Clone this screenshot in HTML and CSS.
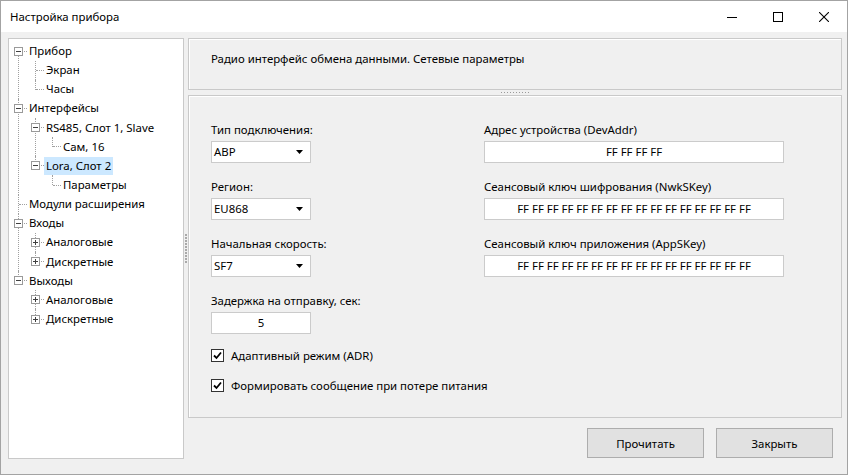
FILE: index.html
```html
<!DOCTYPE html>
<html lang="ru">

<head>
    <meta charset="UTF-8">
    <title>Настройка прибора</title>
    <link rel="stylesheet" href="styles.css">
</head>

<body>
    <div class="window">
        <div class="titlebar">
            <span class="title">Настройка прибора</span>
            <div class="controls">
                <span class="ctl"><svg width="10" height="10" viewBox="0 0 10 10"><path d="M0 5.5H10" stroke="#000" stroke-width="1"/></svg></span>
                <span class="ctl"><svg width="10" height="10" viewBox="0 0 10 10"><rect x="0.5" y="0.5" width="9" height="9" fill="none" stroke="#000"/></svg></span>
                <span class="ctl"><svg width="10" height="10" viewBox="0 0 10 10"><path d="M0 0L10 10M10 0L0 10" stroke="#000" stroke-width="1.1"/></svg></span>
            </div>
        </div>

        <div class="content">
            <div class="tree-panel">
                <ul class="tree">
                    <li>
                        <div class="row"><span class="gut"><i class="exp minus"></i></span><span class="txt">Прибор</span></div>
                        <ul>
                            <li><div class="row"><span class="gut"></span><span class="txt">Экран</span></div></li>
                            <li><div class="row"><span class="gut"></span><span class="txt">Часы</span></div></li>
                        </ul>
                    </li>
                    <li>
                        <div class="row"><span class="gut"><i class="exp minus"></i></span><span class="txt">Интерфейсы</span></div>
                        <ul>
                            <li>
                                <div class="row"><span class="gut"><i class="exp minus"></i></span><span class="txt">RS485, Слот 1, Slave</span></div>
                                <ul>
                                    <li><div class="row"><span class="gut"></span><span class="txt">Сам, 16</span></div></li>
                                </ul>
                            </li>
                            <li>
                                <div class="row"><span class="gut"><i class="exp minus"></i></span><span class="txt selected">Lora, Слот 2</span></div>
                                <ul>
                                    <li><div class="row"><span class="gut"></span><span class="txt">Параметры</span></div></li>
                                </ul>
                            </li>
                        </ul>
                    </li>
                    <li><div class="row"><span class="gut"></span><span class="txt">Модули расширения</span></div></li>
                    <li>
                        <div class="row"><span class="gut"><i class="exp minus"></i></span><span class="txt">Входы</span></div>
                        <ul>
                            <li><div class="row"><span class="gut"><i class="exp plus"></i></span><span class="txt">Аналоговые</span></div></li>
                            <li><div class="row"><span class="gut"><i class="exp plus"></i></span><span class="txt">Дискретные</span></div></li>
                        </ul>
                    </li>
                    <li>
                        <div class="row"><span class="gut"><i class="exp minus"></i></span><span class="txt">Выходы</span></div>
                        <ul>
                            <li><div class="row"><span class="gut"><i class="exp plus"></i></span><span class="txt">Аналоговые</span></div></li>
                            <li><div class="row"><span class="gut"><i class="exp plus"></i></span><span class="txt">Дискретные</span></div></li>
                        </ul>
                    </li>
                </ul>
            </div>

            <div class="vsplit"><span class="grip-v"></span></div>

            <div class="right">
                <div class="head-panel">Радио интерфейс обмена данными. Сетевые параметры</div>
                <div class="hsplit"><span class="grip-h"></span></div>
                <div class="main-panel">
                    <div class="col col-left">
                        <div class="field">
                            <div class="lbl">Тип подключения:</div>
                            <div class="select"><span>ABP</span><svg width="7" height="4" viewBox="0 0 7 4"><path d="M0 0H7L3.5 4Z" fill="#000"/></svg></div>
                        </div>
                        <div class="field">
                            <div class="lbl">Регион:</div>
                            <div class="select"><span>EU868</span><svg width="7" height="4" viewBox="0 0 7 4"><path d="M0 0H7L3.5 4Z" fill="#000"/></svg></div>
                        </div>
                        <div class="field">
                            <div class="lbl">Начальная скорость:</div>
                            <div class="select"><span>SF7</span><svg width="7" height="4" viewBox="0 0 7 4"><path d="M0 0H7L3.5 4Z" fill="#000"/></svg></div>
                        </div>
                        <div class="field">
                            <div class="lbl">Задержка на отправку, сек:</div>
                            <div class="input short">5</div>
                        </div>
                        <div class="check first"><span class="box"><svg width="11" height="11" viewBox="0 0 11 11"><path d="M2 5.5L4.5 8L9 2.5" fill="none" stroke="#000" stroke-width="1.8"/></svg></span>Адаптивный режим (ADR)</div>
                        <div class="check"><span class="box"><svg width="11" height="11" viewBox="0 0 11 11"><path d="M2 5.5L4.5 8L9 2.5" fill="none" stroke="#000" stroke-width="1.8"/></svg></span>Формировать сообщение при потере питания</div>
                    </div>
                    <div class="col col-right">
                        <div class="field">
                            <div class="lbl">Адрес устройства (DevAddr)</div>
                            <div class="input">FF FF FF FF</div>
                        </div>
                        <div class="field">
                            <div class="lbl">Сеансовый ключ шифрования (NwkSKey)</div>
                            <div class="input">FF FF FF FF FF FF FF FF FF FF FF FF FF FF FF FF</div>
                        </div>
                        <div class="field">
                            <div class="lbl">Сеансовый ключ приложения (AppSKey)</div>
                            <div class="input">FF FF FF FF FF FF FF FF FF FF FF FF FF FF FF FF</div>
                        </div>
                    </div>
                </div>
                <div class="buttons">
                    <button class="btn">Прочитать</button>
                    <button class="btn">Закрыть</button>
                </div>
            </div>
        </div>
    </div>
</body>

</html>
```

FILE: styles.css
```css
* {
    box-sizing: border-box;
}

html,
body {
    margin: 0;
    padding: 0;
    width: 848px;
    height: 475px;
    overflow: hidden;
}

body {
    font-family: "Noto Sans", "Open Sans", sans-serif;
    font-size: 11.4px;
    color: #000;
    background: #fff;
}

.window {
    width: 848px;
    height: 475px;
    border: 1px solid #a3a3a3;
    background: #f0f0f0;
    display: flex;
    flex-direction: column;
}

/* title bar */
.titlebar {
    height: 31px;
    flex: none;
    background: #fff;
    display: flex;
    align-items: center;
}

.title {
    padding-left: 9px;
    flex: 1;
}

.controls {
    display: flex;
    height: 100%;
}

.ctl {
    width: 46px;
    height: 100%;
    display: flex;
    align-items: center;
    justify-content: center;
}

.ctl svg {
    display: block;
}

.content {
    flex: 1;
    display: flex;
    padding: 6px 5px 15px 7px;
}

/* tree */
.tree-panel {
    width: 176px;
    flex: none;
    background: #fff;
    border: 1px solid #c9c9c9;
    padding-top: 2.5px;
}

.tree,
.tree ul {
    list-style: none;
    margin: 0;
    padding: 0;
}

.tree ul {
    padding-left: 17px;
}

.tree li {
    position: relative;
}

.tree li::before {
    content: "";
    position: absolute;
    left: 9px;
    top: 0;
    bottom: 0;
    border-left: 1px dotted #a0a0a0;
}

.tree > li:first-child::before {
    top: 9px;
}

.tree li:last-child::before {
    bottom: auto;
    height: 10px;
}

.row {
    display: flex;
    align-items: center;
    height: 19.15px;
    white-space: nowrap;
}

.gut {
    width: 20px;
    height: 19px;
    flex: none;
    position: relative;
}

.gut::after {
    content: "";
    position: absolute;
    left: 10px;
    top: 9px;
    width: 8px;
    border-top: 1px dotted #a0a0a0;
}

.exp {
    position: absolute;
    left: 5px;
    top: 5px;
    width: 9px;
    height: 9px;
    border: 1px solid #9a9a9a;
    background: #fff;
    z-index: 1;
}

.exp::before,
.exp::after {
    content: "";
    position: absolute;
    background: #404040;
}

.exp::before {
    left: 1px;
    top: 3px;
    width: 5px;
    height: 1px;
}

.exp.plus::after {
    left: 3px;
    top: 1px;
    width: 1px;
    height: 5px;
}

.txt {
    padding: 1px 2px;
    margin-left: -2px;
    line-height: 16px;
}

.txt.selected {
    background: #cce8ff;
}

/* splitters */
.vsplit {
    width: 4px;
    flex: none;
    display: flex;
    align-items: center;
    justify-content: center;
}

.grip-v {
    width: 2px;
    height: 29px;
    background: repeating-linear-gradient(to bottom, #a9a9a9 0 2px, transparent 2px 3px);
}

.hsplit {
    height: 5px;
    flex: none;
    display: flex;
    align-items: center;
    justify-content: center;
}

.grip-h {
    width: 29px;
    height: 1px;
    background: repeating-linear-gradient(to right, #9a9a9a 0 1px, transparent 1px 3px);
}

/* right side */
.right {
    width: 654px;
    flex: none;
    display: flex;
    flex-direction: column;
}

.head-panel {
    height: 52px;
    flex: none;
    border: 1px solid #c9c9c9;
    box-shadow: inset 1px 1px 0 #fff;
    padding: 12px 0 0 22px;
    line-height: 16px;
}

.main-panel {
    flex: 1;
    border: 1px solid #c9c9c9;
    box-shadow: inset 1px 1px 0 #fff;
    padding: 26px 0 0 22px;
    display: flex;
}

.col-left {
    width: 273px;
}

.col-right {
    width: 300px;
}

.field {
    margin-bottom: 16px;
}

.lbl {
    line-height: 16px;
    margin-bottom: 3px;
    white-space: nowrap;
}

.select,
.input {
    height: 22px;
    background: #fff;
    border: 1px solid #cbcbcb;
    line-height: 20px;
}

.select {
    width: 100px;
    display: flex;
    align-items: center;
    justify-content: space-between;
    padding: 0 7px 0 2px;
}

.select svg {
    display: block;
}

.input {
    text-align: center;
    white-space: nowrap;
}

.input.short {
    width: 100px;
}

.check {
    display: flex;
    align-items: center;
    height: 16px;
    margin-top: 14px;
    white-space: nowrap;
}

.check.first {
    margin-top: -3px;
}

.box {
    width: 13px;
    height: 13px;
    border: 1px solid #333;
    background: #fff;
    margin-right: 7px;
    display: flex;
    align-items: center;
    justify-content: center;
}

.box svg {
    display: block;
}

.buttons {
    height: 41px;
    flex: none;
    display: flex;
    justify-content: flex-end;
    gap: 12px;
    padding: 10px 9px 1px 0;
}

.btn {
    width: 117px;
    height: 30px;
    font: inherit;
    color: #000;
    background: #e1e1e1;
    border: 1px solid #adadad;
    padding: 0;
}
```
